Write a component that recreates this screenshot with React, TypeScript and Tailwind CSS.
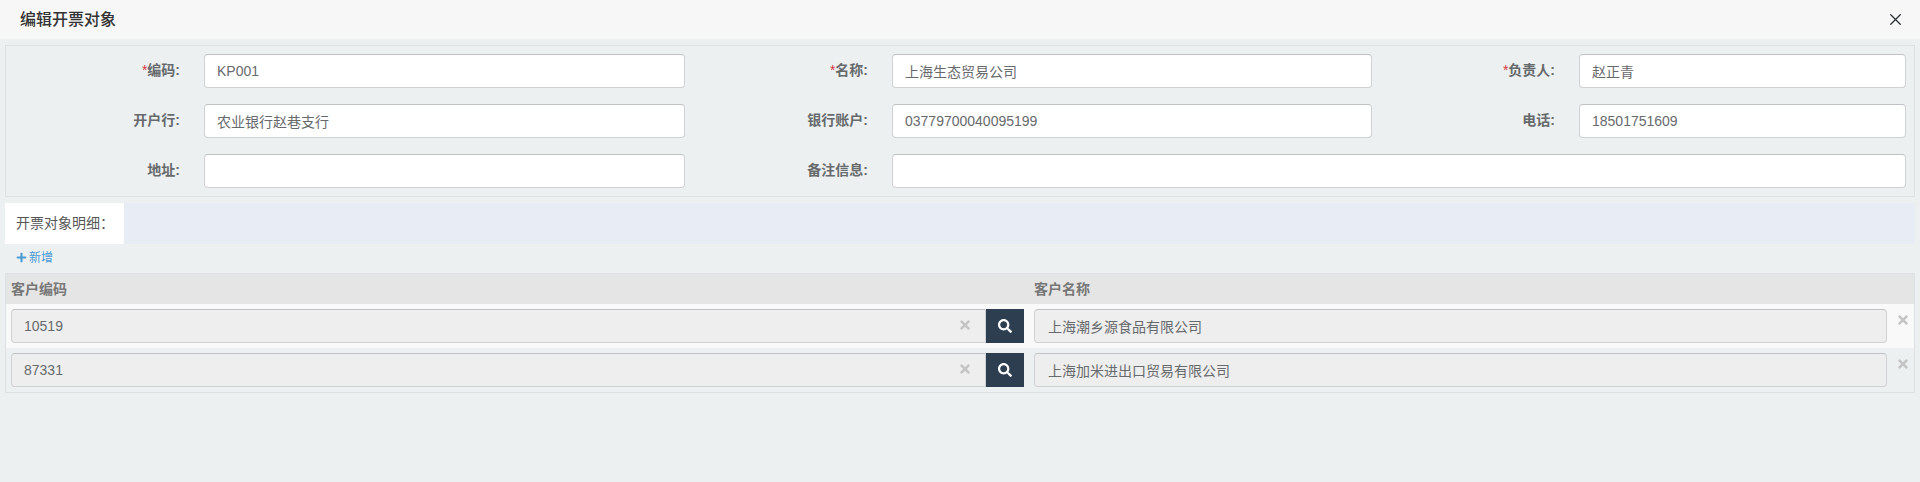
import { FaPlus, FaSearch, FaTimes } from 'react-icons/fa';
import { X } from 'lucide-react';

function Label({ text, required }: { text: string; required?: boolean }) {
  return (
    <label className="h-[34px] -translate-y-px pr-6 text-right text-[14px] font-bold leading-[34px] text-[#676a6c]">
      {required && <span className="font-normal text-[#d9363e]">*</span>}
      {text}:
    </label>
  );
}

function Field({ value, wide }: { value?: string; wide?: boolean }) {
  return (
    <input
      readOnly
      value={value ?? ''}
      className={`${wide ? 'col-span-3' : ''} h-[34px] w-full rounded-[4px] border border-[#cfd1d2] border-t-[#bfc2c4] bg-white px-3 text-[14px] text-[#676a6c] outline-none`}
    />
  );
}

const rows = [
  { code: '10519', name: '上海潮乡源食品有限公司', striped: true },
  { code: '87331', name: '上海加米进出口贸易有限公司', striped: false },
];

export default function App() {
  return (
    <div className="min-h-[482px] bg-[#ecf0f1] font-['Liberation_Sans','Noto_Sans_CJK_SC',sans-serif] text-[#676a6c]">
      <header className="flex h-[39px] items-center justify-between bg-[#f7f7f7] pl-5 pr-[15px]">
        <h1 className="text-[16px] font-medium text-[#333]">编辑开票对象</h1>
        <X size={19} strokeWidth={1.6} className="text-[#2b2f36]" />
      </header>

      <div className="px-[5px] pt-[6px]">
        <form className="grid grid-cols-[198px_481px_207px_480px_207px_327px] gap-y-4 border border-[#dde1e3] pb-2 pr-2 pt-2">
          <Label text="编码" required />
          <Field value="KP001" />
          <Label text="名称" required />
          <Field value="上海生态贸易公司" />
          <Label text="负责人" required />
          <Field value="赵正青" />
          <Label text="开户行" />
          <Field value="农业银行赵巷支行" />
          <Label text="银行账户" />
          <Field value="03779700040095199" />
          <Label text="电话" />
          <Field value="18501751609" />
          <Label text="地址" />
          <Field />
          <Label text="备注信息" />
          <Field wide />
        </form>

        <div className="mt-[6px] flex h-[41px] bg-[#e8edf5]">
          <div className="w-[119px] bg-white pl-[11px] text-[14px] leading-[41px] text-[#555]">开票对象明细：</div>
        </div>

        <button className="flex h-[29px] items-center gap-[2px] pb-[2px] pl-[11px] text-[12px] text-[#4a9ad4]">
          <FaPlus size={11} />
          新增
        </button>

        <div className="border border-[#dde1e3]">
          <div className="flex h-[30px] items-center bg-[#e5e5e5] pl-[5px] text-[14px] font-bold text-[#777]">
            <div className="w-[1023px]">客户编码</div>
            <div>客户名称</div>
          </div>
          {rows.map((row) => (
            <div key={row.code} className={`flex h-11 items-center pl-[5px] ${row.striped ? 'bg-[#f9f9f9]' : ''}`}>
              <div className="relative w-[975px]">
                <input
                  readOnly
                  value={row.code}
                  className="h-[34px] w-full rounded-l-[4px] border border-[#cfd1d2] border-t-[#bfc2c4] bg-[#eee] px-3 text-[14px] text-[#676a6c] outline-none"
                />
                <FaTimes size={14} className="absolute left-[947px] top-[9px] text-[#c4c4c4]" />
              </div>
              <button className="flex h-[34px] w-[38px] items-center justify-center bg-[#2c3e50] text-white">
                <FaSearch size={14} />
              </button>
              <input
                readOnly
                value={row.name}
                className="ml-[10px] h-[34px] w-[853px] rounded-[4px] border border-[#cfd1d2] border-t-[#bfc2c4] bg-[#eee] px-[13px] text-[14px] text-[#676a6c] outline-none"
              />
              <FaTimes size={14} className="ml-[9px] -translate-y-[6px] text-[#c4c4c4]" />
            </div>
          ))}
        </div>
      </div>
    </div>
  );
}
